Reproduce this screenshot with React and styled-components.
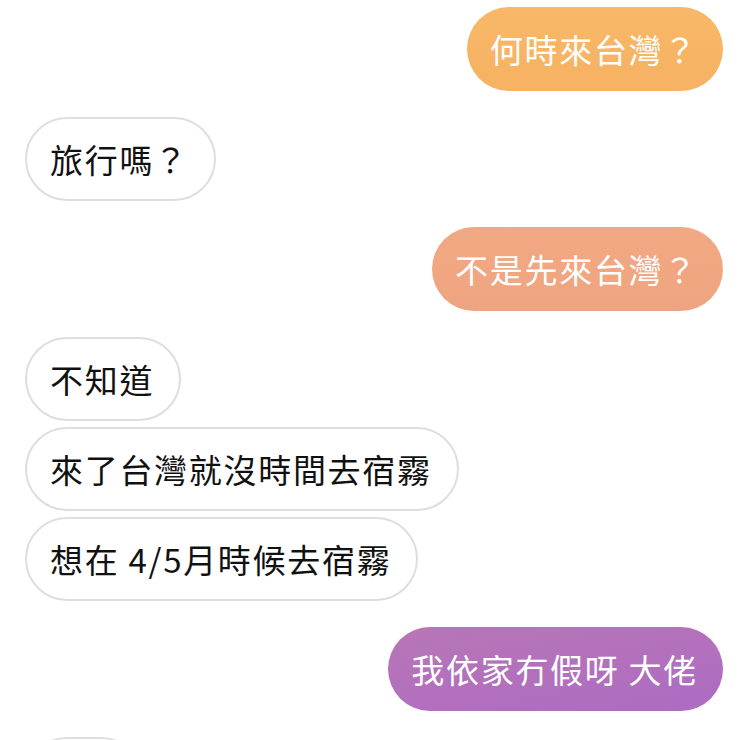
import React from 'react';
import styled, { createGlobalStyle } from 'styled-components';

const GlobalStyle = createGlobalStyle`
  html, body {
    margin: 0;
    padding: 0;
    background: #fff;
  }
  body {
    font-family: "Noto Sans CJK TC", "Noto Sans", sans-serif;
  }
`;

const Thread = styled.div`
  width: 740px;
  height: 740px;
  overflow: hidden;
  box-sizing: border-box;
  padding: 7px 17px 0 25px;
  display: flex;
  flex-direction: column;
`;

const Group = styled.div`
  display: flex;
  flex-direction: column;
  align-items: ${p => (p.$mine ? 'flex-end' : 'flex-start')};
  gap: 6px;
  margin-bottom: 26px;
`;

const Bubble = styled.div`
  box-sizing: border-box;
  height: 84px;
  min-width: ${p => p.$minWidth || 0}px;
  padding: 0 25px 0 23px;
  display: flex;
  align-items: center;
  border-radius: 42px;
  font-size: 33px;
  letter-spacing: 1.7px;
  white-space: nowrap;
  color: ${p => (p.$tone ? '#fff' : '#111')};
  background: ${p => p.$tone || '#fff'};
  border: ${p => (p.$tone ? 'none' : '2px solid #dedede')};
`;

const tones = {
  orange: 'linear-gradient(180deg, #f9b869 0%, #f6b162 100%)',
  salmon: 'linear-gradient(180deg, #f1a983 0%, #eea480 100%)',
  purple: 'linear-gradient(170deg, #b876b6 0%, #ad6bc3 100%)',
};

const messages = [
  { mine: true, lines: [{ text: '何時來台灣？', tone: 'orange' }] },
  { mine: false, lines: [{ text: '旅行嗎？' }] },
  { mine: true, lines: [{ text: '不是先來台灣？', tone: 'salmon' }] },
  {
    mine: false,
    lines: [
      { text: '不知道' },
      { text: '來了台灣就沒時間去宿霧' },
      { text: '想在 4/5月時候去宿霧' },
    ],
  },
  { mine: true, lines: [{ text: '我依家冇假呀 大佬', tone: 'purple' }] },
  // next incoming bubble, only its top edge is in view
  { mine: false, lines: [{ text: '', minWidth: 118 }] },
];

export default function App() {
  return (
    <>
      <GlobalStyle />
      <Thread>
        {messages.map((m, i) => (
          <Group key={i} $mine={m.mine}>
            {m.lines.map((l, j) => (
              <Bubble key={j} $tone={l.tone && tones[l.tone]} $minWidth={l.minWidth}>
                {l.text}
              </Bubble>
            ))}
          </Group>
        ))}
      </Thread>
    </>
  );
}
